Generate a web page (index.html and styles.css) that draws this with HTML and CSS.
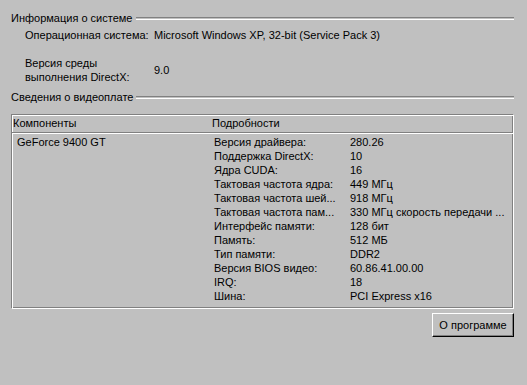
FILE: index.html
```html
<!DOCTYPE html>
<html lang="ru">
<head>
<meta charset="utf-8">
<link rel="stylesheet" href="styles.css">
</head>
<body>
<div class="window">
  <div class="group-title first">
    <span class="group-label">Информация о системе</span>
    <span class="group-line"></span>
  </div>
  <div class="info-row os">
    <span class="info-label">Операционная система:</span>
    <span class="info-value">Microsoft Windows XP, 32-bit (Service Pack 3)</span>
  </div>
  <div class="info-row dx">
    <span class="info-label">Версия среды<br>выполнения DirectX:</span>
    <span class="info-value">9.0</span>
  </div>
  <div class="group-title second">
    <span class="group-label">Сведения о видеоплате</span>
    <span class="group-line"></span>
  </div>
  <div class="listview">
    <div class="lv-header">
      <span class="lv-col1">Компоненты</span>
      <span class="lv-col2">Подробности</span>
    </div>
    <div class="lv-body">
      <div class="lv-component">GeForce 9400 GT</div>
      <div class="lv-details">
        <span>Версия драйвера:</span><span>280.26</span>
        <span>Поддержка DirectX:</span><span>10</span>
        <span>Ядра CUDA:</span><span>16</span>
        <span>Тактовая частота ядра:</span><span>449 МГц</span>
        <span>Тактовая частота шей...</span><span>918 МГц</span>
        <span>Тактовая частота пам...</span><span>330 МГц скорость передачи ...</span>
        <span>Интерфейс памяти:</span><span>128 бит</span>
        <span>Память:</span><span>512 МБ</span>
        <span>Тип памяти:</span><span>DDR2</span>
        <span>Версия BIOS видео:</span><span>60.86.41.00.00</span>
        <span>IRQ:</span><span>18</span>
        <span>Шина:</span><span>PCI Express x16</span>
      </div>
    </div>
  </div>
  <div class="actions">
    <button class="btn" type="button">О программе</button>
  </div>
</div>
</body>
</html>
```
FILE: styles.css
```css
html, body {
  margin: 0;
  padding: 0;
  background: #c0c0c0;
}
body {
  font-family: "Liberation Sans", Arial, sans-serif;
  font-size: 11px;
  color: #000;
  width: 527px;
  height: 385px;
  overflow: hidden;
}
.window {
  padding: 11px 13px 0 11px;
}
.group-title {
  display: flex;
  align-items: center;
  height: 14px;
  line-height: 14px;
}
.group-label {
  flex: 0 0 125px;
  white-space: nowrap;
}
.group-line {
  flex: 1;
  height: 1px;
  border-top: 1px solid #808080;
  border-bottom: 1px solid #fff;
  margin-top: 1px;
}
.info-row {
  display: flex;
  align-items: center;
  padding-left: 14px;
  line-height: 14px;
}
.info-label {
  flex: 0 0 129px;
}
.os {
  margin-top: 3px;
}
.dx {
  margin-top: 14px;
}
.second {
  margin-top: 6px;
}
.listview {
  margin-top: 10px;
  height: 195px;
  box-sizing: border-box;
  border: 1px solid;
  border-color: #808080 #fff #fff #808080;
  box-shadow: inset 1px 1px 0 #fff, inset -1px -1px 0 #808080;
}
.lv-header {
  display: flex;
  height: 17px;
  line-height: 17px;
  border-bottom: 1px solid #808080;
  box-shadow: 0 1px 0 #fff;
}
.lv-col1 {
  flex: 0 0 198px;
  padding-left: 1px;
  box-sizing: border-box;
}
.lv-col2 {
  padding-left: 2px;
}
.lv-body {
  display: flex;
  padding-top: 2px;
  line-height: 14px;
}
.lv-component {
  flex: 0 0 198px;
  padding-left: 5px;
  box-sizing: border-box;
}
.lv-details {
  display: grid;
  grid-template-columns: 136px auto;
  padding-left: 4px;
  white-space: nowrap;
}
.actions {
  display: flex;
  justify-content: flex-end;
  margin-top: 4px;
}
.btn {
  width: 82px;
  height: 24px;
  padding: 0;
  font: inherit;
  color: #000;
  background: #c0c0c0;
  border: 1px solid;
  border-color: #fff #000 #000 #fff;
  box-shadow: inset -1px -1px 0 #808080;
}
```
